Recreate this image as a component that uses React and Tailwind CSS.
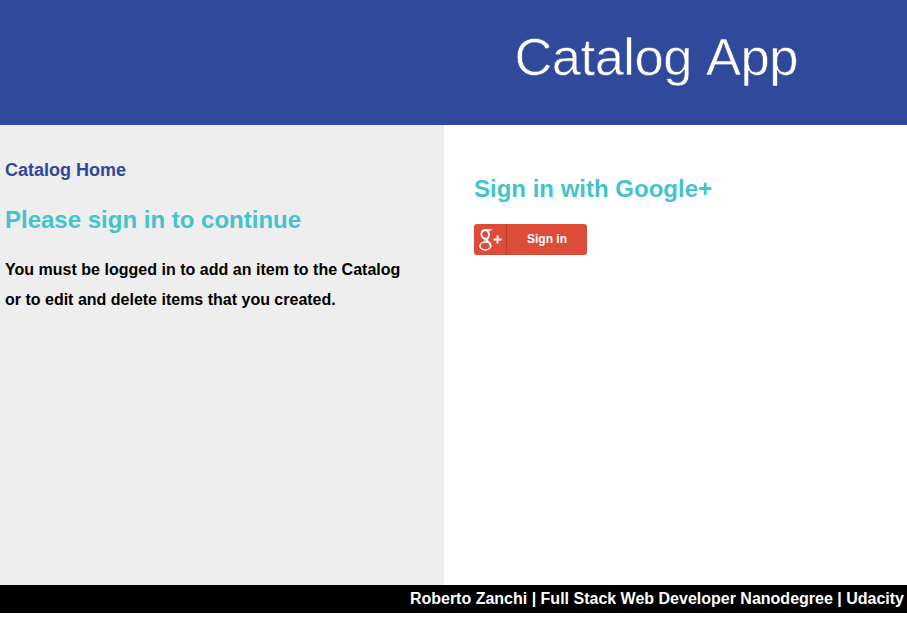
function GooglePlusMark() {
  return (
    <svg viewBox="0 0 24 24" width="24" height="24" fill="none" stroke="#fff" aria-hidden="true">
      <ellipse cx="7.2" cy="6.4" rx="3.8" ry="4.3" strokeWidth="1.9" transform="rotate(-14 7.2 6.4)" />
      <path d="M7 1.3H14.4L12.6 2.7H9.5Z" fill="#fff" strokeWidth="0.4" />
      <path d="M10.6 9.6C8.2 11.4 8 12.2 9.6 13.4C12 14.8 13 16.2 12.4 18.4" strokeWidth="1.9" />
      <path d="M6.6 10.8C6.2 12.4 7.2 13.6 8.8 14" strokeWidth="1" />
      <ellipse cx="7.3" cy="18" rx="5.4" ry="3.9" strokeWidth="1.5" />
      <path d="M19.5 7.5V15.5M15.6 11.5H23.6" strokeWidth="1.8" />
    </svg>
  );
}

export default function App() {
  return (
    <div className="flex h-[632px] w-[907px] flex-col overflow-hidden bg-white font-['Liberation_Sans',Arial,sans-serif]">
      <header className="flex h-[125px] shrink-0 justify-end bg-[#30499b] pt-[21px] pr-[109px]">
        <h1 className="h-[72px] text-[52.5px] leading-[72px] tracking-[-0.5px] [word-spacing:3px] whitespace-nowrap text-white [-webkit-text-stroke:0.6px_#30499b]">
          Catalog App
        </h1>
      </header>
      <main className="flex h-[460px] shrink-0">
        <aside className="w-[444px] bg-[#eeeeee] pt-[30px] pl-[5px] font-bold">
          <a className="block text-[18px] leading-[30px] text-[#30499b]">Catalog Home</a>
          <h2 className="mt-[20px] text-[24px] leading-[30px] text-[#43c3cb]">Please sign in to continue</h2>
          <p className="mt-[20px] w-[420px] text-[16px] leading-[30px] text-black">
            <span className="tracking-[0.02px]">You must be logged in to add an item to the Catalog</span>
            <br />
            or to edit and delete items that you created.
          </p>
        </aside>
        <section className="flex-1 pt-[49px] pl-[30px] font-bold">
          <h2 className="text-[24px] leading-[30px] text-[#43c3cb]">Sign in with Google+</h2>
          <button className="mt-[20px] flex h-[31px] w-[113px] items-center overflow-hidden rounded-[3px] bg-[#dd4b39] text-white">
            <span className="flex h-full w-[33px] items-center justify-center border-r border-[#bb3f30]">
              <GooglePlusMark />
            </span>
            <span className="flex-1 text-center text-[12px] leading-[31px]">Sign in</span>
          </button>
        </section>
      </main>
      <footer className="h-[28px] shrink-0 bg-black pr-[3px] text-right text-[16px] leading-[27px] font-bold whitespace-nowrap text-white">
        Roberto Zanchi | Full Stack Web Developer Nanodegree | Udacity
      </footer>
    </div>
  );
}
